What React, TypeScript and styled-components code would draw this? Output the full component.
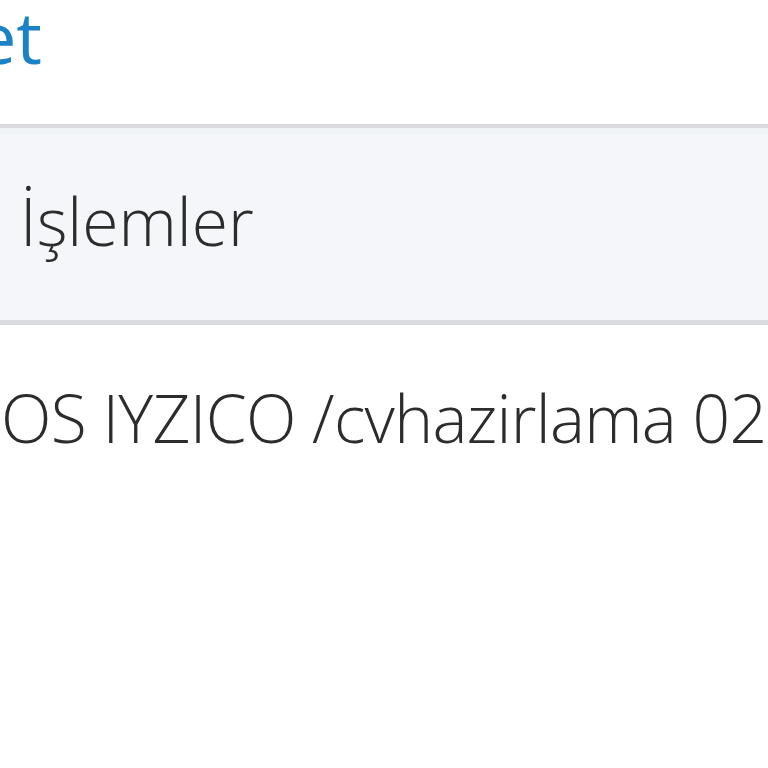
import React from 'react';
import styled, { createGlobalStyle } from 'styled-components';

const color = {
    blue: '#1b82c5',
    text: '#2c2c2c',
    line: '#d9dbdf',
    head: '#f4f6fa',
};

const GlobalStyle = createGlobalStyle`
    html, body {
        margin: 0;
        padding: 0;
        background: #fff;
    }
    body {
        font-family: "Open Sans", "Noto Sans", sans-serif;
        overflow: hidden;
    }
`

const Page = styled.main`
    width: 768px;
    height: 768px;
    overflow: hidden;
    display: flex;
    flex-direction: column;
`

const TitleBar = styled.header`
    height: 124px;
    width: 42px;
    display: flex;
    justify-content: flex-end;
    white-space: nowrap;

    h1{
        margin: 0;
        font-size: 72px;
        line-height: 72px;
        font-weight: 400;
        color: ${color.blue};
    }
`

const Table = styled.section`
    display: flex;
    flex-direction: column;
    width: 100%;
`

const HeadRow = styled.div`
    height: 192px;
    background: ${color.head};
    border-top: 4px solid ${color.line};
    border-bottom: 5px solid ${color.line};
    box-shadow: inset 0 6px 0 #eff2f6;
    display: flex;
    align-items: flex-start;
`

const Cell = styled.div<{ $shift?: number; $tight?: boolean }>`
    font-size: 66px;
    line-height: 66px;
    font-weight: 300;
    color: ${color.text};
    white-space: nowrap;
    padding-top: 59px;
    margin-left: ${(p) => p.$shift ?? 0}px;
    letter-spacing: ${(p) => (p.$tight ? '-0.7px' : '0')};
`

const BodyRow = styled.div`
    display: flex;
    align-items: flex-start;
`

const App = () => {
    return (
        <>
            <GlobalStyle />
            <Page>
                <TitleBar>
                    <h1>Sepet</h1>
                </TitleBar>
                <Table>
                    <HeadRow>
                        <Cell $shift={20}>İşlemler</Cell>
                    </HeadRow>
                    <BodyRow>
                        <Cell $shift={-37} $tight>POS IYZICO /cvhazirlama 02</Cell>
                    </BodyRow>
                </Table>
            </Page>
        </>
    )
}

export default App;
